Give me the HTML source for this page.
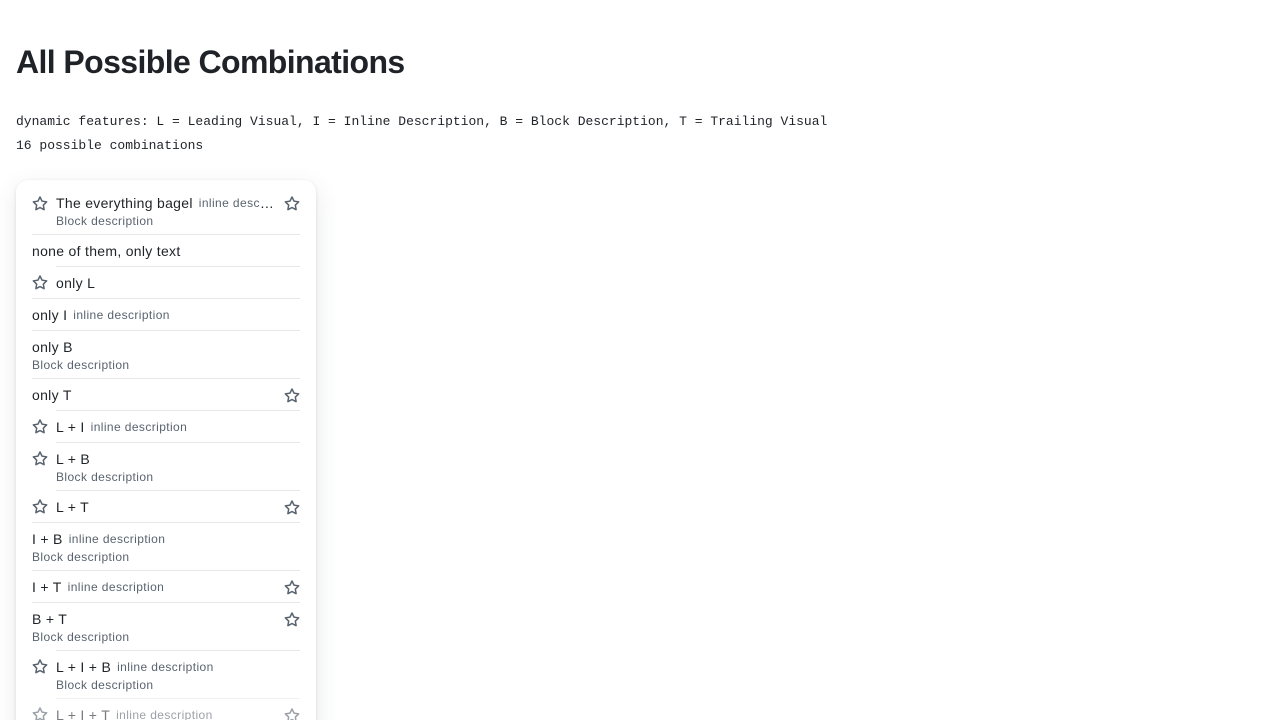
<!DOCTYPE html>
<html style="overflow:hidden;height:720px"><head><meta charset="utf-8"><style>
body{margin:0;background:#fff;font-family:"Liberation Sans",sans-serif;color:#1f2328;width:1280px;height:720px;overflow:hidden;position:relative}
h1{position:absolute;left:16px;top:42px;margin:0;font-size:32px;font-weight:700;letter-spacing:-0.6px;line-height:40px}
.m{position:absolute;left:16px;font-family:"Liberation Mono",monospace;font-size:13px;line-height:16px}
.card{position:absolute;left:16px;top:180px;width:300px;height:560px;border-radius:12px;background:#fff;box-shadow:0 1px 3px rgba(31,35,40,.12),0 8px 24px rgba(66,74,83,.12);padding-top:7px;box-sizing:border-box;overflow:hidden}
.it{display:flex;padding:0 16px}
.lv{width:24px;flex:none;padding-top:9px}
.c{flex:1;border-top:1px solid #e5e8eb;padding:6px 0 5px;display:flex;min-width:0}
.it:first-child .c{border-top:none}
.tx{flex:1;min-width:0}
.l1{font-size:14px;line-height:20px;height:20px;white-space:nowrap;overflow:hidden;text-overflow:ellipsis;letter-spacing:.3px}
.i{font-size:12px;color:#59636e;margin-left:6px;letter-spacing:.4px;vertical-align:top;line-height:21px}
.b{font-size:12px;line-height:16px;height:16px;color:#59636e;letter-spacing:.4px}
.tv{width:16px;flex:none;margin-left:8px;padding-top:3px}
svg{display:block;fill:#59636e}
</style></head><body>
<h1>All Possible Combinations</h1>
<div class="m" style="top:114px">dynamic features: L = Leading Visual, I = Inline Description, B = Block Description, T = Trailing Visual</div>
<div class="m" style="top:138px">16 possible combinations</div>
<svg width="0" height="0" style="position:absolute"><defs><symbol id="s" viewBox="0 0 16 16"><path d="M8 .25a.75.75 0 0 1 .673.418l1.882 3.815 4.21.612a.75.75 0 0 1 .416 1.279l-3.046 2.970.719 4.192a.751.751 0 0 1-1.088.791L8 12.347l-3.766 1.980a.75.75 0 0 1-1.088-.79l.72-4.194L.818 6.374a.75.75 0 0 1 .416-1.280l4.21-.611L7.327.668A.75.75 0 0 1 8 .25Zm0 2.445L6.615 5.5a.75.75 0 0 1-.564.41l-3.097.45 2.240 2.184a.75.75 0 0 1 .216.664l-.528 3.084 2.769-1.456a.75.75 0 0 1 .698 0l2.770 1.456-.53-3.084a.75.75 0 0 1 .216-.664l2.240-2.183-3.096-.45a.75.75 0 0 1-.564-.41L8 2.694Z"/></symbol></defs></svg>
<div class="card">
<div class="it"><div class="lv"><svg width="16" height="16"><use href="#s"/></svg></div><div class="c"><div class="tx"><div class="l1">The everything bagel<span class="i">inline description</span></div><div class="b">Block description</div></div><div class="tv"><svg width="16" height="16"><use href="#s"/></svg></div></div></div>
<div class="it"><div class="c"><div class="tx"><div class="l1">none of them, only text</div></div></div></div>
<div class="it"><div class="lv"><svg width="16" height="16"><use href="#s"/></svg></div><div class="c"><div class="tx"><div class="l1">only L</div></div></div></div>
<div class="it"><div class="c"><div class="tx"><div class="l1">only I<span class="i">inline description</span></div></div></div></div>
<div class="it"><div class="c"><div class="tx"><div class="l1">only B</div><div class="b">Block description</div></div></div></div>
<div class="it"><div class="c"><div class="tx"><div class="l1">only T</div></div><div class="tv"><svg width="16" height="16"><use href="#s"/></svg></div></div></div>
<div class="it"><div class="lv"><svg width="16" height="16"><use href="#s"/></svg></div><div class="c"><div class="tx"><div class="l1">L + I<span class="i">inline description</span></div></div></div></div>
<div class="it"><div class="lv"><svg width="16" height="16"><use href="#s"/></svg></div><div class="c"><div class="tx"><div class="l1">L + B</div><div class="b">Block description</div></div></div></div>
<div class="it"><div class="lv"><svg width="16" height="16"><use href="#s"/></svg></div><div class="c"><div class="tx"><div class="l1">L + T</div></div><div class="tv"><svg width="16" height="16"><use href="#s"/></svg></div></div></div>
<div class="it"><div class="c"><div class="tx"><div class="l1">I + B<span class="i">inline description</span></div><div class="b">Block description</div></div></div></div>
<div class="it"><div class="c"><div class="tx"><div class="l1">I + T<span class="i">inline description</span></div></div><div class="tv"><svg width="16" height="16"><use href="#s"/></svg></div></div></div>
<div class="it"><div class="c"><div class="tx"><div class="l1">B + T</div><div class="b">Block description</div></div><div class="tv"><svg width="16" height="16"><use href="#s"/></svg></div></div></div>
<div class="it"><div class="lv"><svg width="16" height="16"><use href="#s"/></svg></div><div class="c"><div class="tx"><div class="l1">L + I + B<span class="i">inline description</span></div><div class="b">Block description</div></div></div></div>
<div class="it" style="opacity:.6"><div class="lv"><svg width="16" height="16"><use href="#s"/></svg></div><div class="c"><div class="tx"><div class="l1">L + I + T<span class="i">inline description</span></div></div><div class="tv"><svg width="16" height="16"><use href="#s"/></svg></div></div></div>
</div>
</body></html>
